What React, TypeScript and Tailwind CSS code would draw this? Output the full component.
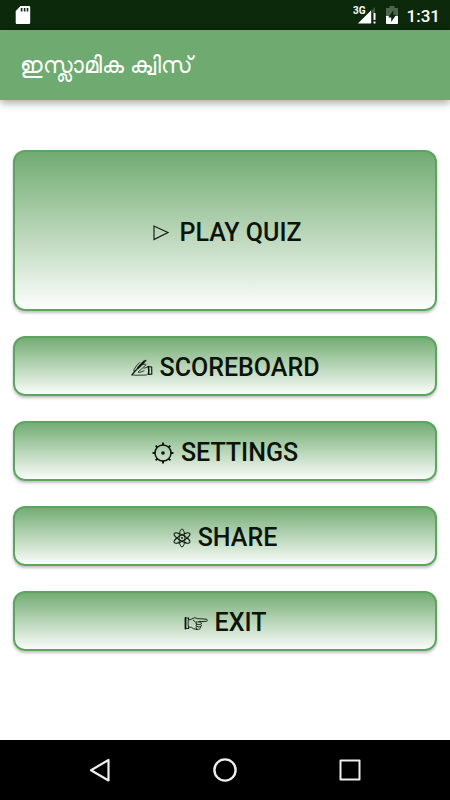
import type { ReactNode } from 'react';

interface MenuItem {
    label: string;
    icon: ReactNode;
    large?: boolean;
}

const PlayIcon = () => (
    <svg viewBox="0 0 24 20" className="w-6 h-5" fill="none" stroke="currentColor" strokeWidth="1.1">
        <path d="M6 3v13.5L20 9.5z" />
    </svg>
);

const WriteIcon = () => (
    <svg viewBox="0 0 22 20" className="w-[22px] h-5" fill="none" stroke="currentColor" strokeLinecap="round" strokeLinejoin="round">
        <path strokeWidth="2.2" d="M13.2 3.6 7.4 9.6" />
        <path strokeWidth="1.3" d="M7.4 9.6 3.4 13.8 1 17M14.8 2.4 13.2 3.6" />
        <path strokeWidth="0.8" d="M8.6 4.6 5.6 7.6 2.8 11.8 3.4 13.8M2.6 17.2h5.6l7.4-.2.9-.8M11.6 6.6l2.8-.6.6.8-4.4 4.2-3.6 3 1.4.6 4.6-1.8M13 10.2l4-1.4" />
        <path strokeWidth="1.5" d="M17.2 8.6c.8 2.2.9 5 .3 7.6" />
        <path strokeWidth="1.1" d="M17.2 8.6l3.5.4.1 7.2-3.3.2" />
    </svg>
);

const GearIcon = () => (
    <svg viewBox="0 0 22 22" className="w-[22px] h-[22px]" fill="none" stroke="currentColor">
        <circle cx="11" cy="11" r="8" strokeWidth="1.5" />
        <circle cx="11" cy="11" r="1.8" fill="currentColor" stroke="none" />
        <path
            strokeWidth="1.9"
            d="M11 .6v2.6M11 18.8v2.6M.6 11h2.6M18.8 11h2.6M3.7 3.7l1.8 1.8M16.5 16.5l1.8 1.8M3.7 18.3l1.8-1.8M16.5 5.5l1.8-1.8"
        />
    </svg>
);

const AtomIcon = () => (
    <svg viewBox="0 0 18 20" className="w-[18px] h-5" fill="none" stroke="currentColor" strokeWidth="0.9">
        <ellipse cx="9" cy="10" rx="2.9" ry="9" />
        <ellipse cx="9" cy="10" rx="2.9" ry="9" transform="rotate(60 9 10)" />
        <ellipse cx="9" cy="10" rx="2.9" ry="9" transform="rotate(120 9 10)" />
        <circle cx="9" cy="10" r="0.9" fill="currentColor" stroke="none" />
    </svg>
);

const PointIcon = () => (
    <svg viewBox="0 0 24 20" className="w-6 h-5" fill="none" stroke="currentColor" strokeLinecap="round" strokeLinejoin="round">
        <path strokeWidth="1.8" d="M1.5 5v10.5" />
        <path strokeWidth="0.9" d="M1.5 5h3.2M1.5 15.5h3.2M4.6 5.2c-.6 3-.6 7 0 10.2M4.6 6.8l3-.6 3.2-1.6 2.6 1 9 .6c1.2.2 1.2 2 0 2.1l-7.6.5M9.4 7.4l2.2 1.8 1.6-.2M4.6 14l2.8.3 2.2 1.5 3.2.5M14.5 8.8c2 0 3.2.7 3 1.8s-2.8 1.1-4.7.6M17 11.6c.9.5.7 1.9-.5 2.2-1.5.3-3 .1-3.6-.3M16.5 13.9c.3 1.2-.4 2.2-1.8 2.4h-2M12.8 9.7c-1 .5-1.2 1.3 0 1.7-1 .5-1 1.5 0 2-1 .6-1 1.8 0 2.6" />
    </svg>
);

const menuItems: MenuItem[] = [
    { label: 'PLAY QUIZ', icon: <PlayIcon />, large: true },
    { label: 'SCOREBOARD', icon: <WriteIcon /> },
    { label: 'SETTINGS', icon: <GearIcon /> },
    { label: 'SHARE', icon: <AtomIcon /> },
    { label: 'EXIT', icon: <PointIcon /> },
];

function StatusBar() {
    return (
        <div className="flex h-[30px] items-center justify-between bg-[#0c290c] pl-[15px] pr-[10px] text-white">
            <svg viewBox="0 0 16 20" className="w-4 h-5">
                <path fill="white" d="M5.5 1H14a1.2 1.2 0 0 1 1.2 1.2v15.6A1.2 1.2 0 0 1 14 19H1.9a1.2 1.2 0 0 1-1.2-1.2V6z" />
                <path stroke="#0c290c" strokeWidth="1.6" d="M6.6 3v3.6M9.6 3v3.6M12.5 3v3.6" />
            </svg>
            <div className="flex items-center">
                <svg viewBox="0 0 24 20" className="w-6 h-5">
                    <path fill="#3f563f" d="M22 2v6h-3v10H5z" />
                    <path fill="white" d="M18 5.5v13H5z" />
                    <path fill="white" d="M20.5 8h2v7h-2zM20.5 16.5h2v2h-2z" />
                    <text x="0" y="9" fill="white" className="font-['Roboto',sans-serif] text-[10px] font-bold">3G</text>
                </svg>
                <svg viewBox="0 0 14 20" className="ml-2 w-[14px] h-5">
                    <path fill="#50654f" d="M4.5 1h5v2H13v16H1V3h3.5z" />
                    <path fill="white" d="M1 11h12v7a1 1 0 0 1-1 1H2a1 1 0 0 1-1-1z" />
                    <path fill="#0c290c" d="m8.5 5-5.3 7.5h3V17l5-7.2H8.5z" />
                </svg>
                <span className="ml-2 pt-0.5 text-[17px] leading-5 font-medium">1:31</span>
            </div>
        </div>
    );
}

function MenuButton({ label, icon, large }: MenuItem) {
    return (
        <button
            className={`flex w-full items-center justify-center gap-[7px] rounded-xl border-2 border-[#5ca55f] bg-linear-to-b from-[#6faa70] to-white bg-origin-border pt-1 text-[25px] font-medium text-[#0b130b] shadow-[0_2px_3px_rgba(0,0,0,0.25)] ${large ? 'h-[161px]' : 'h-[60px]'}`}
        >
            {icon}
            <span>{label}</span>
        </button>
    );
}

function NavigationBar() {
    return (
        <nav className="flex h-[60px] items-center justify-center gap-[97px] bg-black text-[#eeeeee]">
            <button aria-label="Back">
                <svg viewBox="0 0 28 28" className="w-7 h-7" fill="none" stroke="currentColor" strokeWidth="2.2" strokeLinejoin="round">
                    <path d="M22.5 4v20.5L5 14.2z" />
                </svg>
            </button>
            <button aria-label="Home">
                <svg viewBox="0 0 28 28" className="w-7 h-7" fill="none" stroke="currentColor" strokeWidth="2.4">
                    <circle cx="14" cy="14" r="10.6" />
                </svg>
            </button>
            <button aria-label="Recent apps">
                <svg viewBox="0 0 28 28" className="w-7 h-7" fill="none" stroke="currentColor" strokeWidth="2" strokeLinejoin="round">
                    <path d="M4.5 4.5h19v19h-19z" />
                </svg>
            </button>
        </nav>
    );
}

export default function App() {
    return (
        <div className="flex min-h-screen flex-col bg-white font-['Roboto',sans-serif]">
            <StatusBar />
            <header className="flex h-[70px] items-center bg-[#6faa70] px-5 pt-0.5 shadow-[0_3px_8px_rgba(0,0,0,0.35)]">
                <h1 lang="ml" className="text-[23px] text-white">ഇസ്ലാമിക ക്വിസ്</h1>
            </header>
            <main className="flex flex-1 flex-col gap-[25px] px-[13px] pt-[50px] pb-10">
                {menuItems.map((item) => (
                    <MenuButton key={item.label} {...item} />
                ))}
            </main>
            <NavigationBar />
        </div>
    );
}
